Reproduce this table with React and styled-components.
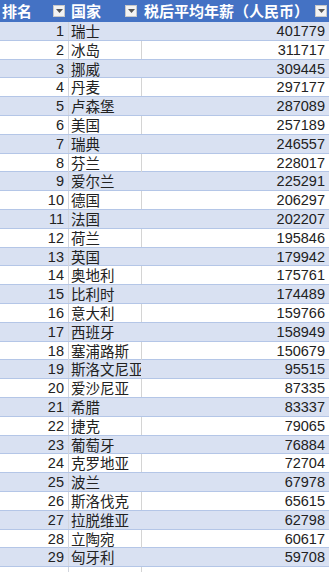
import React from 'react'
import styled, { createGlobalStyle } from 'styled-components'

const GlobalStyle = createGlobalStyle`
  html, body {
    margin: 0;
    padding: 0;
    background: #ffffff;
  }
`

const rows = [
  [1, '瑞士', 401779],
  [2, '冰岛', 311717],
  [3, '挪威', 309445],
  [4, '丹麦', 297177],
  [5, '卢森堡', 287089],
  [6, '美国', 257189],
  [7, '瑞典', 246557],
  [8, '芬兰', 228017],
  [9, '爱尔兰', 225291],
  [10, '德国', 206297],
  [11, '法国', 202207],
  [12, '荷兰', 195846],
  [13, '英国', 179942],
  [14, '奥地利', 175761],
  [15, '比利时', 174489],
  [16, '意大利', 159766],
  [17, '西班牙', 158949],
  [18, '塞浦路斯', 150679],
  [19, '斯洛文尼亚', 95515],
  [20, '爱沙尼亚', 87335],
  [21, '希腊', 83337],
  [22, '捷克', 79065],
  [23, '葡萄牙', 76884],
  [24, '克罗地亚', 72704],
  [25, '波兰', 67978],
  [26, '斯洛伐克', 65615],
  [27, '拉脱维亚', 62798],
  [28, '立陶宛', 60617],
  [29, '匈牙利', 59708],
]

// little grey triangle of the Excel filter button
function FilterArrow() {
  return (
    <svg width="7" height="4" viewBox="0 0 7 4">
      <path d="M0 0 L7 0 L3.5 4 Z" fill="#555" />
    </svg>
  )
}

function App() {
  return (
    <Sheet>
      <GlobalStyle />
      <HeaderRow>
        <HeadCell>
          <span>排名</span>
          <FilterButton><FilterArrow /></FilterButton>
        </HeadCell>
        <HeadCell>
          <span>国家</span>
          <FilterButton><FilterArrow /></FilterButton>
        </HeadCell>
        <HeadCell $last>
          <span>税后平均年薪（人民币）</span>
          <FilterButton><FilterArrow /></FilterButton>
        </HeadCell>
      </HeaderRow>
      {rows.map(([rank, name, pay]) => (
        <Row key={rank} $band={rank % 2 === 1}>
          <RankCell>{rank}</RankCell>
          <NameCell>{name}</NameCell>
          <ValueCell $band={rank % 2 === 1}>{pay}</ValueCell>
        </Row>
      ))}
      <Row $band={false}>
        <RankCell />
        <NameCell />
        <ValueCell $band={false} />
      </Row>
    </Sheet>
  )
}

const Sheet = styled.div`
  width: 329px;
  height: 572px;
  overflow: hidden;
  background: #fff;
  font-family: "Liberation Sans", "Noto Sans CJK SC", sans-serif;
  color: #222;
`

const HeaderRow = styled.div`
  display: grid;
  grid-template-columns: 69px 72px 1fr;
  height: 22px;
  background: #4472c4;
  color: #fff;
  font-family: "Noto Sans CJK SC", sans-serif;
  font-weight: 700;
  font-size: 15px;
  line-height: 22px;
`

const HeadCell = styled.div`
  display: flex;
  align-items: center;
  justify-content: space-between;
  padding: 0 ${p => (p.$last ? '2px' : '4px')} 0 ${p => (p.$last ? '3px' : '2px')};
  overflow-x: clip;
  white-space: nowrap;
`

const FilterButton = styled.div`
  width: 12px;
  height: 12px;
  flex: none;
  box-sizing: border-box;
  display: flex;
  align-items: center;
  justify-content: center;
  background: #f3f3f3;
  border: 1px solid #c8c8c8;
`

const Row = styled.div`
  display: grid;
  grid-template-columns: 69px 72px 1fr;
  height: 18.8px;
  box-sizing: border-box;
  border-bottom: 1px solid #b4c6e7;
  background: ${p => (p.$band ? '#d9e1f2' : '#ffffff')};
  font-size: 14.5px;
  line-height: 18px;
`

const RankCell = styled.div`
  text-align: right;
  padding-right: 4px;
  font-family: "Liberation Sans", sans-serif;
  border-right: 1px solid #d2d6de;
`

const NameCell = styled.div`
  padding-left: 2px;
  font-family: "Noto Sans CJK SC", sans-serif;
  font-weight: 400;
  white-space: nowrap;
  overflow-x: clip;
`

const ValueCell = styled.div`
  text-align: right;
  padding-right: 4px;
  font-family: "Liberation Sans", sans-serif;
  border-left: 1px solid ${p => (p.$band ? 'transparent' : '#d4d4d4')};
`

export default App
